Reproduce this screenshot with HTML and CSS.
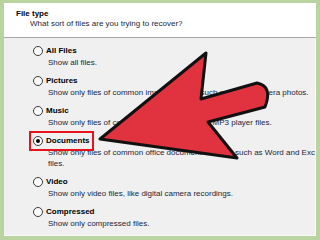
FILE: index.html
```html
<!DOCTYPE html>
<html>
<head>
<meta charset="utf-8">
<link rel="stylesheet" href="styles.css">
</head>
<body>
<div class="frame">
  <div class="header">
    <div class="title">File type</div>
    <div class="subtitle">What sort of files are you trying to recover?</div>
  </div>
  <div class="panel">
    <div class="option">
      <div class="row"><span class="radio"></span><span class="label">All Files</span></div>
      <div class="desc">Show all files.</div>
    </div>
    <div class="option">
      <div class="row"><span class="radio"></span><span class="label">Pictures</span></div>
      <div class="desc">Show only files of common image formats, such as digital camera photos.</div>
    </div>
    <div class="option">
      <div class="row"><span class="radio"></span><span class="label">Music</span></div>
      <div class="desc">Show only files of common audio formats, like MP3 player files.</div>
    </div>
    <div class="option">
      <div class="row"><span class="highlight"><span class="radio checked"></span><span class="label">Documents</span></span></div>
      <div class="desc">Show only files of common office document formats, such as Word and Excel<br>files.</div>
    </div>
    <div class="option">
      <div class="row"><span class="radio"></span><span class="label">Video</span></div>
      <div class="desc">Show only video files, like digital camera recordings.</div>
    </div>
    <div class="option">
      <div class="row"><span class="radio"></span><span class="label">Compressed</span></div>
      <div class="desc">Show only compressed files.</div>
    </div>
  </div>
  <svg class="arrow" width="320" height="240" viewBox="0 0 320 240">
    <path d="M100,139 L206,53 L201,99 L257,83 Q273,86 265,107 L208,122 L237,158 Z" fill="#e0333f" stroke="#111" stroke-width="3" stroke-linejoin="round"/>
  </svg>
</div>
</body>
</html>
```
FILE: styles.css
```css
html, body {
  margin: 0;
  padding: 0;
}
body {
  width: 320px;
  height: 240px;
  overflow: hidden;
  background: #b9d3a1;
  font-family: "Liberation Sans", Arial, sans-serif;
  font-size: 8px;
}
.frame {
  position: relative;
  width: 320px;
  height: 240px;
  box-sizing: border-box;
  padding: 3px 4px 4px 4px;
  display: flex;
  flex-direction: column;
}
.header {
  background: #ffffff;
  height: 35px;
  box-sizing: border-box;
  border-bottom: 1px solid #a7a7a7;
  padding: 6px 0 0 12px;
  color: #1b1f3a;
}
.title {
  font-weight: bold;
  color: #000;
  line-height: 10px;
}
.subtitle {
  line-height: 10px;
  padding-left: 14px;
}
.panel {
  flex: 1;
  background: #f0f0f0;
  border-right: 1px solid #fbfbfb;
  border-bottom: 1px solid #fbfbfb;
  overflow: hidden;
  padding: 7px 0 0 29px;
  display: flex;
  flex-direction: column;
  gap: 7px;
}
.option {
  display: flex;
  flex-direction: column;
}
.row {
  height: 12px;
  display: flex;
  align-items: center;
}
.highlight {
  position: relative;
  display: flex;
  align-items: center;
}
.highlight::after {
  content: "";
  position: absolute;
  left: -4px;
  top: -4px;
  width: 61px;
  height: 16px;
  border: 2px solid #e5141c;
}
.radio {
  width: 10px;
  height: 10px;
  box-sizing: border-box;
  border: 1px solid #3a3a3a;
  border-radius: 50%;
  background: #fdfdfd;
  display: flex;
  align-items: center;
  justify-content: center;
}
.radio.checked::before {
  content: "";
  width: 4px;
  height: 4px;
  border-radius: 50%;
  background: #000;
}
.label {
  font-weight: bold;
  color: #000;
  margin-left: 3px;
  line-height: 12px;
}
.desc {
  margin-left: 15px;
  line-height: 11px;
  color: #1b1f3a;
  white-space: nowrap;
}
.arrow {
  position: absolute;
  left: 0;
  top: 0;
}
```
